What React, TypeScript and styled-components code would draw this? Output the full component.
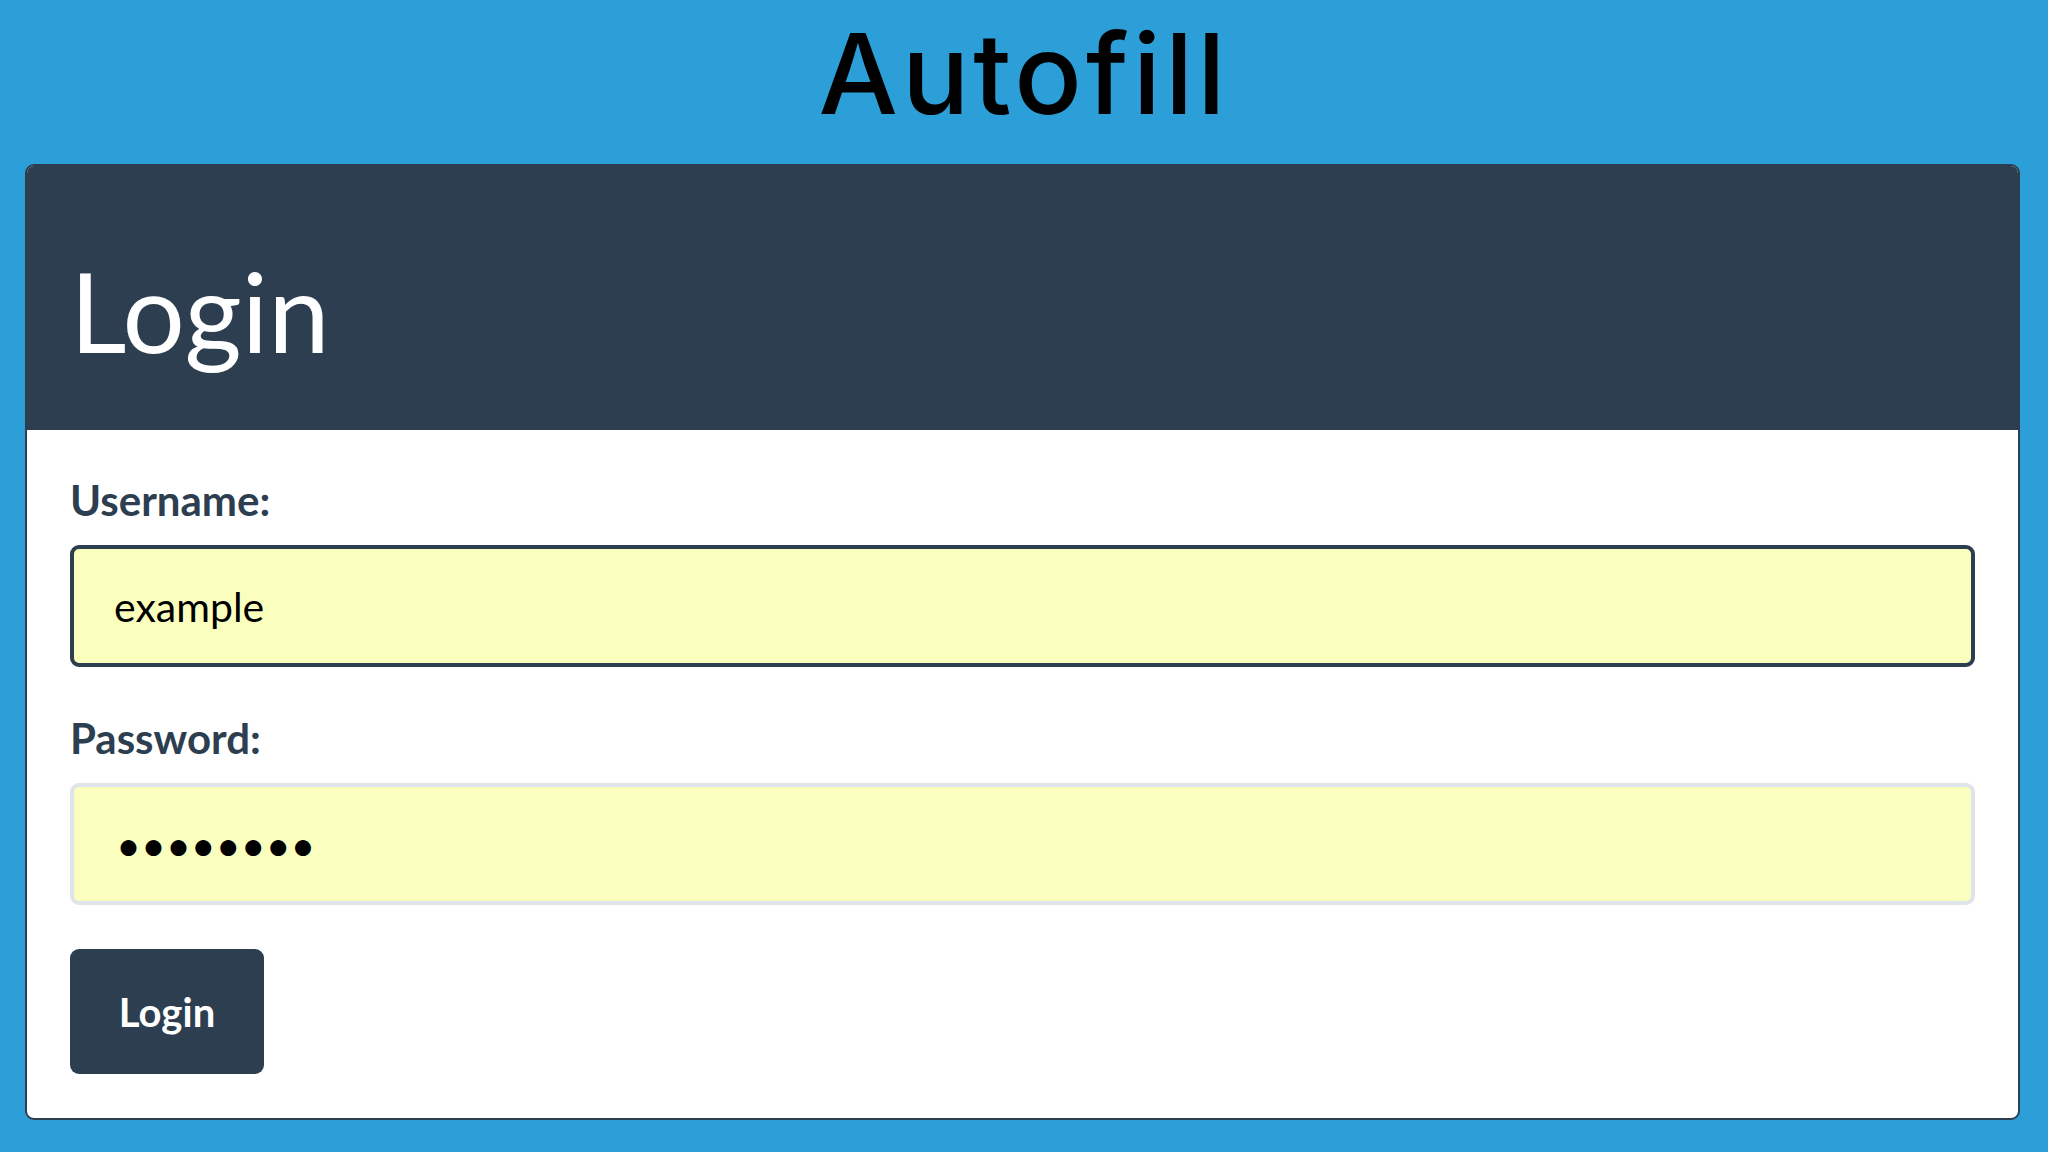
import React from "react";
import styled, { createGlobalStyle } from "styled-components";

const GlobalStyle = createGlobalStyle`
  html, body {
    margin: 0;
    padding: 0;
    background: #2c9fd8;
  }
  body {
    font-family: "Lato", "Liberation Sans", sans-serif;
  }
  * { box-sizing: border-box; }
`;

const Page = styled.div`
  width: 2048px;
  height: 1152px;
  background: #2c9fd8;
  overflow: hidden;
  display: flex;
  flex-direction: column;
`;

const Title = styled.h1`
  margin: 0;
  padding-top: 7px;
  height: 164px;
  text-align: center;
  font-family: "Inter", "Lato", sans-serif;
  font-weight: 500;
  font-size: 112px;
  line-height: 132px;
  letter-spacing: 4px;
  color: #000;
`;

const Card = styled.section`
  margin: 0 28px 0 25px;
  background: #fff;
  border: 2px solid #2c3e50;
  border-radius: 9px;
  overflow: hidden;
  display: flex;
  flex-direction: column;
`;

const CardHeader = styled.header`
  background: #2c3e50;
  height: 264px;
  padding: 78px 43px 0;
`;

const HeaderTitle = styled.h2`
  margin: 0;
  font-family: "Lato", sans-serif;
  font-weight: 400;
  font-size: 110px;
  line-height: 132px;
  color: #fff;
`;

const Form = styled.form`
  display: flex;
  flex-direction: column;
  align-items: flex-start;
  padding: 46px 43px 44px;
`;

const Label = styled.label<{ $gap?: number }>`
  display: block;
  margin-top: ${(p) => p.$gap ?? 0}px;
  font-family: "Lato", sans-serif;
  font-weight: 700;
  font-size: 42px;
  line-height: 48px;
  color: #2c3e50;
`;

const Field = styled.input<{ $focused?: boolean }>`
  display: block;
  width: 100%;
  margin-top: 21px;
  height: 122px;
  padding: 0 40px;
  background: #faffbd;
  border: 4px solid ${(p) => (p.$focused ? "#2c3e50" : "#dfe3ea")};
  border-radius: 9px;
  font-family: "Lato", sans-serif;
  font-size: 41px;
  color: #000;
  outline: none;
`;

const PasswordField = styled(Field)`
  font-size: 43px;
  letter-spacing: 0px;
  padding-left: 42px;
`;

const Button = styled.button`
  margin-top: 44px;
  width: 194px;
  height: 125px;
  background: #2c3e50;
  color: #fff;
  border: none;
  border-radius: 9px;
  font-family: "Lato", sans-serif;
  font-weight: 700;
  font-size: 40px;
  cursor: pointer;
`;

export default function App() {
  return (
    <>
      <GlobalStyle />
      <Page>
        <Title>Autofill</Title>
        <Card>
          <CardHeader>
            <HeaderTitle>Login</HeaderTitle>
          </CardHeader>
          <Form onSubmit={(e) => e.preventDefault()}>
            <Label htmlFor="username">Username:</Label>
            <Field id="username" $focused readOnly value="example" />
            <Label htmlFor="password" $gap={47}>
              Password:
            </Label>
            <PasswordField id="password" type="password" readOnly value="password" />
            <Button type="submit">Login</Button>
          </Form>
        </Card>
      </Page>
    </>
  );
}
